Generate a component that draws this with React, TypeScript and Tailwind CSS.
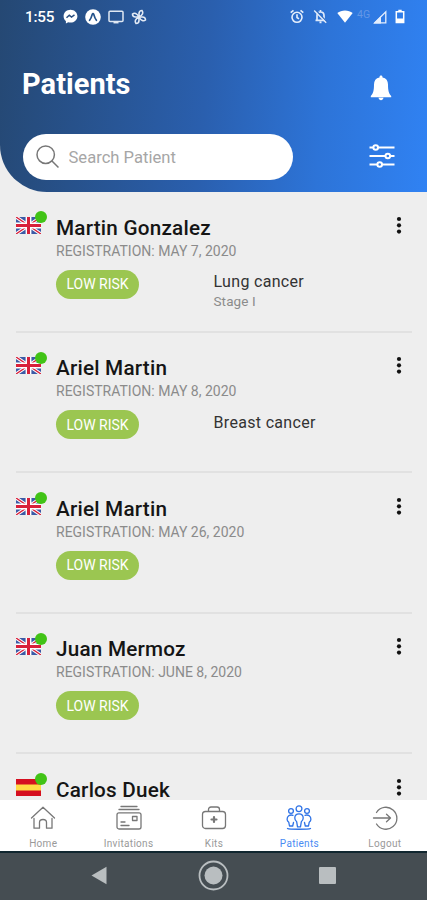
import { ReactNode, useState } from "react";

interface IPatient {
  id: number;
  name: string;
  country: "uk" | "es";
  registration?: string;
  risk?: string;
  diagnosis?: string;
  stage?: string;
}

const patients: IPatient[] = [
  {
    id: 1,
    name: "Martin Gonzalez",
    country: "uk",
    registration: "MAY 7, 2020",
    risk: "LOW RISK",
    diagnosis: "Lung cancer",
    stage: "Stage I",
  },
  {
    id: 2,
    name: "Ariel Martin",
    country: "uk",
    registration: "MAY 8, 2020",
    risk: "LOW RISK",
    diagnosis: "Breast cancer",
  },
  {
    id: 3,
    name: "Ariel Martin",
    country: "uk",
    registration: "MAY 26, 2020",
    risk: "LOW RISK",
  },
  {
    id: 4,
    name: "Juan Mermoz",
    country: "uk",
    registration: "JUNE 8, 2020",
    risk: "LOW RISK",
  },
  {
    id: 5,
    name: "Carlos Duek",
    country: "es",
  },
];

const Flag = ({ country }: { country: IPatient["country"] }) =>
  country === "uk" ? (
    <svg className="w-[25px] h-[17px]" viewBox="0 0 25 17">
      <path fill="#3c5aa6" d="M0 0h25v17H0z" />
      <path stroke="#fff" strokeWidth="3.4" d="M0 0l25 17M25 0L0 17" />
      <path stroke="#d8203a" strokeWidth="1.4" d="M0 0l25 17M25 0L0 17" />
      <path stroke="#fff" strokeWidth="5.8" d="M12.5 0v17M0 8.5h25" />
      <path stroke="#d8203a" strokeWidth="3" d="M12.5 0v17M0 8.5h25" />
    </svg>
  ) : (
    <svg className="w-[25px] h-[17px]" viewBox="0 0 25 17">
      <path fill="#d50f20" d="M0 0h25v17H0z" />
      <path fill="#ffda44" d="M0 5.500h25v6H0z" />
    </svg>
  );

const StatusBar = () => (
  <div className="flex items-center h-8 pl-[25px] pr-[22px] pt-px">
    <span className="w-[38px] text-[15.3px] leading-4 font-medium tracking-[-0.2px]">
      1:55
    </span>
    <svg className="w-[15px] h-[15px]" viewBox="0 0 15 15" fill="none">
      <path
        fill="#fff"
        d="M7.5.7C3.600.7.600 3.500.600 7.200c0 2 .9 3.700 2.300 4.900v2.400l2.300-1.200c.7.200 1.500.3 2.300.3 3.900 0 6.900-2.800 6.900-6.400S11.400.700 7.500.700z"
      />
      <path stroke="#2a4f80" strokeWidth="1.5" d="M3.500 8.800l2.800-2.600 2.200 1.800 3-2.200" />
    </svg>
    <svg className="w-4 h-4 ml-[7px]" viewBox="0 0 16 16" fill="none">
      <circle cx="8" cy="8" r="7.800" fill="#fff" />
      <path
        stroke="#26548c"
        strokeWidth="1.700"
        strokeLinecap="round"
        d="M4.600 11.300C6 9.600 6.600 7.600 7.300 5.200c.3-.9 1.100-.9 1.400 0 .7 2.400 1.300 4.400 2.700 6.100"
      />
    </svg>
    <svg className="w-4 h-4 ml-[7px]" viewBox="0 0 16 16" fill="none">
      <rect x="1" y="2.200" width="14" height="10.300" rx="1" stroke="#dfe7f2" strokeWidth="1.500" />
      <path stroke="#dfe7f2" strokeWidth="1.700" d="M5.500 13.600h5" />
    </svg>
    <svg
      className="w-4 h-4 ml-[7px]"
      viewBox="0 0 16 16"
      fill="none"
      stroke="#e3eaf5"
      strokeWidth="1.600"
    >
      <path d="M8 8V4.500a3 3 0 013-3c1.500 1.800 1 4.500-3 6.500z" />
      <path d="M8 8h3.500a3 3 0 013 3c-1.800 1.500-4.500 1-6.500-3z" />
      <path d="M8 8v3.500a3 3 0 01-3 3C3.500 12.700 4 10 8 8z" />
      <path d="M8 8H4.500a3 3 0 01-3-3C3.300 3.500 6 4 8 8z" />
    </svg>

    <svg
      className="w-[14px] h-[15px] ml-auto"
      viewBox="0 0 14 15"
      fill="none"
      stroke="#e6effc"
      strokeWidth="1.600"
    >
      <circle cx="7" cy="8.300" r="5" />
      <path d="M7 5.300v3.200l2 1.400M.700 3.600l2.800-2.300M13.300 3.600l-2.800-2.300" />
    </svg>
    <svg className="w-[15px] h-[15px] ml-[9px]" viewBox="0 0 15 15" fill="none">
      <path
        stroke="#dfeafb"
        strokeWidth="1.700"
        d="M2.500 11.300h10M4 11V6.500c0-2 1.300-3.500 3.500-3.500S11 4.500 11 6.500V11M7.500 1v2M6.500 13.300h2"
      />
      <path stroke="#2b69c1" strokeWidth="1.300" d="M2.500 1l11.500 12" />
      <path stroke="#dfeafb" strokeWidth="1.500" d="M1.200 1.500l12 12.300" />
    </svg>
    <svg className="w-4 h-[15px] ml-[9px]" viewBox="0 0 16 15" fill="#fff">
      <path d="M.300 4C4.500.600 11.500.600 15.700 4L8 13.800z" />
    </svg>
    <span className="ml-[4px] mb-[4px] w-[14px] text-[10.5px] leading-3 text-[#6397e6]">
      4G
    </span>
    <svg className="w-[14px] h-[14px] ml-[2px]" viewBox="0 0 14 14" fill="none">
      <path stroke="#e4eefd" strokeWidth="1.300" d="M1.800 12.800L12.800 1.800v11z" />
      <path fill="#e4eefd" d="M.5 13.500L8 6v7.500z" />
    </svg>
    <svg className="w-[10px] h-[15px] ml-2" viewBox="0 0 10 15" fill="none">
      <path stroke="#fff" strokeWidth="1.500" d="M1.300 2.800h7.400v10.600H1.300z" />
      <path fill="#fff" d="M3.300.700h3.400v2H3.300zM1 9.500h8V14H1z" />
    </svg>
  </div>
);

const Header = () => {
  const [search, setSearch] = useState("");

  return (
    <header className="shrink-0 h-[192px] rounded-bl-[47px] bg-[linear-gradient(95deg,#254873_0%,#2a5fae_48%,#2d74d8_75%,#3082f3_100%)] text-white">
      <StatusBar />
      <div className="flex justify-between items-center h-[103px] pl-[22px] pr-[35px]">
        <h1 className="text-[29px] leading-9 font-bold tracking-[0.05px]">
          Patients
        </h1>
        <svg className="w-[22px] h-[26px] mt-[9px]" viewBox="0 0 22 26" fill="#fff">
          <path d="M11 .5c-.9 0-1.500.6-1.500 1.500v.5C5.800 3.200 4 5.800 4 9.500c0 6-.7 9-3.200 11.500v1.200h20.400V21C18.700 18.500 18 15.500 18 9.500c0-3.700-1.800-6.300-5.500-7V2c0-.9-.6-1.500-1.500-1.500zM8.500 22.800c.3 1.600 1.200 2.500 2.500 2.500s2.200-.9 2.500-2.500z" />
        </svg>
      </div>
      <div className="flex items-center justify-between pl-[23px] pr-[32px] -mt-px">
        <label className="flex items-center w-[270px] h-[46px] rounded-full bg-white pl-[13px]">
          <svg
            className="w-6 h-6"
            viewBox="0 0 24 24"
            fill="none"
            stroke="#777"
            strokeWidth="1.500"
          >
            <circle cx="9.700" cy="9.700" r="8.700" />
            <path d="M16 16l6.500 6.500" />
          </svg>
          <input
            value={search}
            onChange={(e) => setSearch(e.target.value)}
            placeholder="Search Patient"
            className="w-[200px] ml-[8.5px] mt-[3px] text-[16.6px] text-black placeholder:text-[#a6a6a6] outline-none"
          />
        </label>
        <svg
          className="w-[26px] h-[26px] -mt-[3px]"
          viewBox="0 0 26 26"
          fill="none"
          stroke="#fff"
          strokeWidth="2"
        >
          <path d="M.5 4.500h4M9 4.500h16.500M.500 13h16M21 13h4.500M.500 21.500h8M13 21.500h12.500" />
          <circle cx="6.700" cy="4.500" r="2.300" />
          <circle cx="18.800" cy="13" r="2.300" />
          <circle cx="10.700" cy="21.500" r="2.300" />
        </svg>
      </div>
    </header>
  );
};

const PatientItem = ({
  name,
  country,
  registration,
  risk,
  diagnosis,
  stage,
}: IPatient) => (
  <li className="flex h-[140.5px] shrink-0 pt-[22.5px] border-b-2 border-[#e1e1e1]">
    <div className="relative w-10 shrink-0 pt-[2px]">
      <Flag country={country} />
      <span className="absolute left-[19px] -top-[3.5px] w-3 h-3 rounded-full bg-[#41c316]" />
    </div>
    <div className="flex-1">
      <div className="flex justify-between">
        <h2 className="text-[20.7px] leading-[26px] font-medium tracking-[0.22px] text-[#151515]">
          {name}
        </h2>
        <button className="w-[6px] h-5 mr-[10px]">
          <svg className="w-[6px] h-5" viewBox="0 0 6 20" fill="#111">
            <circle cx="3" cy="4" r="2.100" />
            <circle cx="3" cy="10.300" r="2.100" />
            <circle cx="3" cy="16.600" r="2.100" />
          </svg>
        </button>
      </div>
      {registration && (
        <p className="text-[14px] leading-5 text-[#8b8b8b]">
          REGISTRATION: {registration}
        </p>
      )}
      {risk && (
        <div className="flex mt-[9px]">
          <span className="flex items-center justify-center w-[83px] h-[29px] rounded-full bg-[#9bc651] pt-[1.5px] text-[14px] text-white">
            {risk}
          </span>
          <div className="ml-[74.5px] pt-[1.5px]">
            <p className="text-[16px] leading-[22px] tracking-[0.32px] text-[#333]">
              {diagnosis}
            </p>
            <p className="-mt-[0.5px] text-[13.5px] leading-[17px] tracking-[0.1px] text-[#8b8b8b]">
              {stage}
            </p>
          </div>
        </div>
      )}
    </div>
  </li>
);

const TabIcon = ({ children }: { children: ReactNode }) => (
  <svg
    className="w-[26px] h-[26px]"
    viewBox="0 0 26 26"
    fill="none"
    stroke="currentColor"
    strokeWidth="1.300"
    strokeLinejoin="round"
    strokeLinecap="round"
  >
    {children}
  </svg>
);

const tabs = [
  {
    label: "Home",
    icon: (
      <path d="M1.500 13L13 2.300 24.500 13M4 13.500v9.700h5.500v-5.700c0-2 1.500-3 3.500-3s3.500 1 3.500 3v5.700H22v-9.700" />
    ),
  },
  {
    label: "Invitations",
    icon: (
      <>
        <rect x="1" y="7.800" width="24" height="16.200" rx="2" />
        <path d="M3 4.500h20M5 1.500h16M5 17h4M5 20.500h8M16.500 11.500h4.500v4h-4.500z" />
      </>
    ),
  },
  {
    label: "Kits",
    icon: (
      <>
        <rect x="1.500" y="6.500" width="23" height="17" rx="3" />
        <path d="M7.500 6V4.500c0-1.500 1-2.500 2.500-2.500h6c1.500 0 2.500 1 2.500 2.500V6" />
        <path strokeWidth="2.200" d="M13 12v5M10.500 14.500h5" />
      </>
    ),
  },
  {
    label: "Patients",
    icon: (
      <>
        <circle cx="13" cy="3.700" r="2.900" />
        <circle cx="5" cy="6" r="2.400" />
        <circle cx="21" cy="6" r="2.400" />
        <path d="M13 8.800c-3 0-4.200 1.800-4.200 4.200 0 1.700.8 3 1.900 3.800l.8 5h3l.8-5c1.100-.8 1.900-2.100 1.900-3.800 0-2.400-1.200-4.200-4.200-4.200z" />
        <path d="M7 10.300c-3.500-1-5.900.7-5.900 4 0 1.500.7 2.300 1.700 3l.7 3.700h3.200l.8-3.500M19 10.300c3.500-1 5.900.7 5.900 4 0 1.500-.7 2.300-1.700 3l-.7 3.700h-3.200l-.8-3.500M1.500 23.500c1.500 1 21.500 1 23 0" />
      </>
    ),
  },
  {
    label: "Logout",
    icon: (
      <path d="M4.500 7.500a11 11 0 110 11.500M1.500 13H18M14.500 9.200l4 3.800-4 3.800" />
    ),
  },
];

const TabBar = () => {
  const [active, setActive] = useState("Patients");

  return (
    <nav className="grid grid-cols-5 shrink-0 h-[51px] bg-white">
      {tabs.map(({ label, icon }) => (
        <button
          key={label}
          onClick={() => setActive(label)}
          className={`flex flex-col items-center pt-[5px] pl-px ${
            active === label ? "text-[#2f73e6]" : "text-[#777]"
          }`}
        >
          <TabIcon>{icon}</TabIcon>
          <span
            className={`mt-[7px] text-[10px] leading-3 tracking-[0.3px] ${
              active === label ? "text-[#4a8bf3]" : "text-[#999]"
            }`}
          >
            {label}
          </span>
        </button>
      ))}
    </nav>
  );
};

const SystemBar = () => (
  <div className="grid grid-cols-[198px_31px_198px] items-center shrink-0 h-[49px] pb-[2px] bg-[#454d52] border-t-2 border-[#10262f]">
    <svg className="w-4 h-[19px] ml-[91px]" viewBox="0 0 16 19" fill="#b9bec0">
      <path d="M.500 9.500L15.500.700v17.600z" />
    </svg>
    <svg className="w-[31px] h-[31px]" viewBox="0 0 31 31" fill="none">
      <circle cx="15.500" cy="15.500" r="14" stroke="#b9bec0" strokeWidth="1.800" />
      <circle cx="15.500" cy="15.500" r="9" fill="#b9bec0" />
    </svg>
    <div className="w-[17px] h-[17px] ml-[90px] rounded-[1px] bg-[#b9bec0]" />
  </div>
);

export default () => {
  return (
    <div className="flex flex-col w-full h-[900px] overflow-hidden bg-[#eeeeee] font-[Roboto,sans-serif]">
      <Header />
      <ul className="flex flex-col flex-1 min-h-0 overflow-hidden pl-4 pr-[15px]">
        {patients.map((patient) => (
          <PatientItem key={patient.id} {...patient} />
        ))}
      </ul>
      <TabBar />
      <SystemBar />
    </div>
  );
};
